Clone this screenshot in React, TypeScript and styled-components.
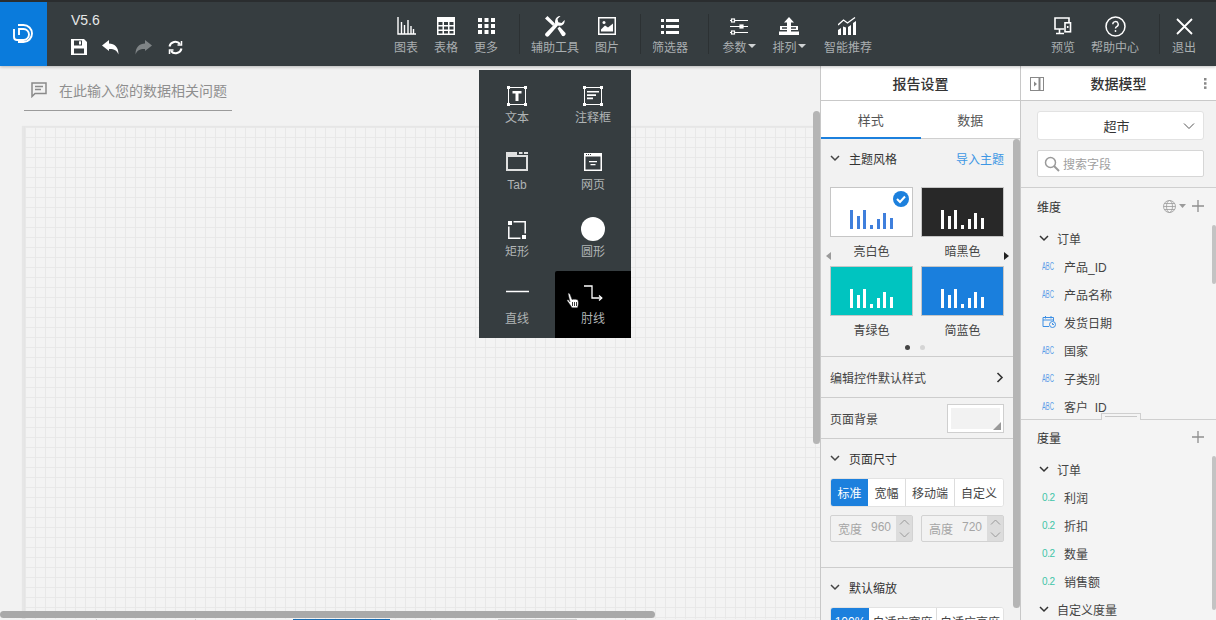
import React from "react";
import styled, { createGlobalStyle } from "styled-components";

const Global = createGlobalStyle`
  html, body { margin: 0; padding: 0; width: 1216px; height: 620px; overflow: hidden; background: #f2f2f2; }
  body { font-family: "Liberation Sans", "Noto Sans CJK SC", sans-serif; }
  * { box-sizing: border-box; }
`;

const Page = styled.div`
  position: relative;
  width: 1216px;
  height: 620px;
  display: flex;
  flex-direction: column;
  overflow: hidden;
`;

const Header = styled.header`
  height: 66px;
  flex: none;
  display: flex;
  background: #363d40;
  border-top: 2px solid #2a2d2f;
  box-shadow: 0 1px 3px rgba(0,0,0,.25);
  position: relative;
  z-index: 3;
`;
const Logo = styled.div`
  width: 47px;
  display: flex;
  align-items: center;
  justify-content: center;
  background: #0a7bdc;
`;
const VersionBlock = styled.div`
  width: 339px;
  padding: 10px 0 0 24px;
  color: #e6e8e8;
  font-size: 14px;
  line-height: 17px;
`;
const QuickIcons = styled.div`
  display: flex;
  gap: 15px;
  margin-top: 10px;
  align-items: center;
`;
const Tools = styled.div`
  display: flex;
  flex: 1;
  align-items: stretch;
`;
const Tool = styled.div<{ $w: number }>`
  width: ${p => p.$w}px;
  flex: none;
  display: flex;
  flex-direction: column;
  align-items: center;
  padding-top: 14px;
  color: #a9aeb0;
  font-size: 12px;
  white-space: nowrap;
`;
const ToolIcon = styled.div`
  height: 20px;
  display: flex;
  align-items: center;
  justify-content: center;
`;
const ToolLabel = styled.div`
  margin-top: 4px;
  line-height: 16px;
  display: flex;
  align-items: center;
  gap: 1px;
`;
const Caret = styled.span`
  width: 0;
  height: 0;
  border-left: 4px solid transparent;
  border-right: 4px solid transparent;
  border-top: 4px solid #d0d3d4;
  margin-bottom: 4px;
`;
const Sep = styled.div<{ $l: number; $r: number }>`
  width: 1px;
  flex: none;
  height: 40px;
  margin: 12px ${p => p.$r}px 0 ${p => p.$l}px;
  background: #2c3133;
`;
const Push = styled.div`
  flex: 1;
`;

const Body = styled.div`
  flex: 1;
  display: flex;
  min-height: 0;
`;
const CanvasArea = styled.main`
  position: relative;
  width: 820px;
  flex: none;
  background: #f2f2f2;
  padding: 11px 0 0 24px;
  overflow: hidden;
`;
const AskBar = styled.div`
  width: 208px;
  height: 34px;
  border-bottom: 1px solid #9b9b9b;
  display: flex;
  align-items: flex-start;
  padding: 4px 0 0 7px;
  gap: 12px;
  color: #8f8f8f;
  font-size: 14px;
  line-height: 20px;
  white-space: nowrap;
`;
const Grid = styled.div`
  width: 796px;
  height: 500px;
  margin-top: 15px;
  border-top: 1px solid #e6e6e6;
  border-left: 1px solid #e4e4e4;
  box-shadow: -2px 0 1px #e6e6e6;
  background-color: #f3f3f3;
  background-image:
    linear-gradient(to right, #e8e8e8 1px, transparent 1px),
    linear-gradient(to bottom, #e8e8e8 1px, transparent 1px);
  background-size: 10px 10px;
`;
const HScroll = styled.div`
  position: absolute;
  left: 0;
  bottom: 2px;
  width: 655px;
  height: 7px;
  border-radius: 4px;
  background: #a9a9a9;
`;
const Peek = styled.div`
  position: absolute;
  left: 0;
  right: 0;
  bottom: 0;
  height: 1px;
  display: flex;
  background: #f2f2f2;
`;
const PeekPart = styled.i<{ $l: number; $w: number; $c: string }>`
  display: block;
  margin-left: ${p => p.$l}px;
  width: ${p => p.$w}px;
  background: ${p => p.$c};
`;
const VScroll = styled.div<{ $top: number; $h: number; $w?: number; $c?: string }>`
  position: absolute;
  right: 0;
  top: ${p => p.$top}px;
  width: ${p => p.$w ?? 7}px;
  height: ${p => p.$h}px;
  border-radius: 4px;
  background: ${p => p.$c ?? "#b5b5b5"};
`;

const Menu = styled.div`
  position: absolute;
  left: 479px;
  top: 70px;
  width: 152px;
  height: 268px;
  background: #363d40;
  display: grid;
  grid-template-columns: 76px 76px;
  grid-template-rows: repeat(4, 67px);
  z-index: 5;
`;
const MenuItem = styled.div<{ $active?: boolean }>`
  position: relative;
  display: flex;
  flex-direction: column;
  align-items: center;
  padding-top: 14px;
  background: ${p => (p.$active ? "#000" : "transparent")};
  border-radius: ${p => (p.$active ? "2px 0 0 0" : "0")};
  color: #b0b4b5;
  font-size: 12px;
`;
const MenuIcon = styled.div`
  height: 23px;
  display: flex;
  align-items: center;
  justify-content: center;
`;
const MenuLabel = styled.div`
  margin-top: 3px;
  line-height: 16px;
`;
const Cursor = styled.svg`
  position: absolute;
  left: 11px;
  top: 21px;
`;

const Panel = styled.aside<{ $w: number }>`
  position: relative;
  width: ${p => p.$w}px;
  flex: none;
  background: #f2f2f2;
  border-left: 1px solid #c8c8c8;
  display: flex;
  flex-direction: column;
  overflow: hidden;
  color: #333;
`;
const PanelTitle = styled.div`
  height: 35px;
  flex: none;
  background: #fff;
  border-bottom: 1px solid #c9c9c9;
  display: flex;
  align-items: center;
  justify-content: center;
  font-size: 14px;
  font-weight: 500;
  color: #333;
  position: relative;
`;
const TitleLeft = styled.div`
  position: absolute;
  left: 9px;
  top: 11px;
  line-height: 0;
`;
const TitleRight = styled.div`
  position: absolute;
  right: 9px;
  top: 12px;
  line-height: 0;
`;
const Tabs = styled.div`
  height: 38px;
  flex: none;
  background: #fff;
  display: flex;
  border-bottom: 1px solid #cfcfcf;
`;
const Tab = styled.div<{ $on?: boolean }>`
  flex: 1;
  display: flex;
  align-items: center;
  justify-content: center;
  font-size: 13px;
  color: #555;
  border-bottom: 2px solid ${p => (p.$on ? "#1c80dd" : "transparent")};
  margin-bottom: -1px;
`;
const Section = styled.section<{ $h: number; $line?: boolean }>`
  height: ${p => p.$h}px;
  flex: none;
  padding: 0 16px 0 9px;
  border-bottom: ${p => (p.$line ? "1px solid #cdcdcd" : "0")};
`;
const SecHead = styled.div`
  display: flex;
  align-items: center;
  height: 39px;
  font-size: 12px;
  color: #333;
  gap: 9px;
`;
const ImportLink = styled.span`
  margin-left: auto;
  color: #3d97e4;
`;
const Themes = styled.div`
  display: grid;
  grid-template-columns: 83px 83px;
  column-gap: 8px;
  position: relative;
  margin-top: 9px;
`;
const ThemeCard = styled.div`
  display: flex;
  flex-direction: column;
  align-items: center;
  height: 79px;
  font-size: 12px;
  color: #444;
`;
const Swatch = styled.div<{ $bg: string; $fg?: string }>`
  position: relative;
  width: 83px;
  height: 50px;
  background: ${p => p.$bg};
  border: 1px solid #c6c6c6;
  display: flex;
  align-items: flex-end;
  justify-content: center;
  padding-bottom: 7px;
  margin-bottom: 5px;
`;
const Bars = styled.div`
  display: flex;
  align-items: flex-end;
  gap: 3.67px;
`;
const BarEl = styled.div<{ $c: string }>`
  width: 3px;
  background: ${p => p.$c};
`;
const Check = styled.div`
  position: absolute;
  top: 3px;
  right: 3px;
  line-height: 0;
`;
const ArrowL = styled.div<{ $c: string; $side: "l" | "r" }>`
  position: absolute;
  top: 65px;
  ${p => (p.$side === "l" ? "left: -4px;" : "right: -5px;")}
  width: 0;
  height: 0;
  border-top: 4px solid transparent;
  border-bottom: 4px solid transparent;
  ${p => (p.$side === "l" ? `border-right: 5px solid ${p.$c};` : `border-left: 5px solid ${p.$c};`)}
`;
const Dots = styled.div`
  display: flex;
  justify-content: center;
  gap: 10px;
  padding-right: 5px;
`;
const Dot = styled.i<{ $c: string }>`
  width: 5px;
  height: 5px;
  border-radius: 50%;
  background: ${p => p.$c};
`;
const RowLine = styled.div<{ $h: number }>`
  height: ${p => p.$h}px;
  flex: none;
  padding: 0 16px 0 9px;
  display: flex;
  align-items: center;
  justify-content: space-between;
  border-bottom: 1px solid #cdcdcd;
  font-size: 12px;
  color: #444;
`;
const ColorBox = styled.div`
  position: relative;
  width: 55px;
  height: 27px;
  background: #f2f2f2;
  border: 3px solid #fff;
  outline: 1px solid #cfcfcf;
  margin-right: 1px;
  &::after {
    content: "";
    position: absolute;
    right: -1px;
    bottom: -1px;
    border-left: 8px solid transparent;
    border-bottom: 8px solid #999;
  }
`;
const BtnGroup = styled.div<{ $cols: string }>`
  display: grid;
  grid-template-columns: ${p => p.$cols};
  width: 174px;
  height: 29px;
  background: #fff;
  border: 1px solid #e2e2e2;
  border-radius: 3px;
  font-size: 12px;
  overflow: hidden;
`;
const Seg = styled.div<{ $on?: boolean; $rule?: boolean }>`
  display: flex;
  align-items: center;
  justify-content: center;
  white-space: nowrap;
  overflow: hidden;
  background: ${p => (p.$on ? "#1c80dd" : "#fff")};
  color: ${p => (p.$on ? "#fff" : "#444")};
  border-left: ${p => (p.$rule ? "1px solid #ddd" : "0")};
`;
const SpinRow = styled.div`
  display: flex;
  justify-content: space-between;
  margin-top: 8px;
  width: 174px;
`;
const Spin = styled.div`
  width: 83px;
  height: 27px;
  border: 1px solid #d2d2d2;
  border-radius: 2px;
  display: flex;
  align-items: center;
  color: #a5a5a5;
  font-size: 12px;
  padding-left: 7px;
`;
const SpinText = styled.span`
  flex: 1;
  display: flex;
  gap: 9px;
`;
const SpinBtns = styled.div`
  width: 16px;
  height: 100%;
  background: #dcdcdc;
  display: flex;
  flex-direction: column;
  align-items: center;
  justify-content: space-around;
  line-height: 0;
`;

const ModelTop = styled.div`
  height: 87px;
  flex: none;
  padding: 10px 12px 0 16px;
  border-bottom: 1px solid #cfcfcf;
`;
const Select = styled.div`
  position: relative;
  width: 167px;
  height: 29px;
  background: #fff;
  border: 1px solid #e2e2e2;
  border-radius: 3px;
  display: flex;
  align-items: center;
  justify-content: center;
  padding-right: 8px;
  font-size: 13px;
  color: #333;
`;
const SelectArrow = styled.svg`
  position: absolute;
  right: 8px;
  top: 10px;
`;
const Search = styled.div`
  width: 167px;
  height: 27px;
  margin-top: 10px;
  background: #fff;
  border: 1px solid #d6d6d6;
  border-radius: 2px;
  display: flex;
  align-items: center;
  padding-left: 6px;
  gap: 3px;
  color: #a0a0a0;
  font-size: 12px;
`;
const FieldSection = styled.div<{ $h: number; $line?: boolean }>`
  height: ${p => p.$h}px;
  flex: none;
  padding: 0 12px 0 16px;
  overflow: hidden;
  background: #f4f4f4;
  border-bottom: ${p => (p.$line ? "1px solid #cfcfcf" : "0")};
`;
const FieldHead = styled.div<{ $up?: boolean }>`
  height: 36px;
  margin-top: ${p => (p.$up ? "-1px" : "0")};
  display: flex;
  align-items: center;
  justify-content: space-between;
  font-size: 12px;
  color: #333;
`;
const HeadIcons = styled.div`
  display: flex;
  align-items: center;
  gap: 3px;
  line-height: 0;
`;
const Group = styled.div`
  height: 28px;
  display: flex;
  align-items: center;
  gap: 8px;
  font-size: 12px;
  color: #444;
  padding-left: 2px;
`;
const Field = styled.div`
  height: 28px;
  display: flex;
  align-items: center;
  font-size: 12px;
  color: #444;
  white-space: pre;
  padding-left: 5px;
`;
const Badge = styled.span<{ $c: string }>`
  width: 22px;
  flex: none;
  margin-top: 2px;
  color: ${p => p.$c};
  font-size: 10px;
  letter-spacing: -.4px;
  line-height: 12px;
`;
const AbcBadge = styled(Badge)`
  letter-spacing: 0;
  transform: scaleX(.58);
  transform-origin: left center;
`;
const Handle = styled.div`
  position: absolute;
  left: 80px;
  top: 347px;
  width: 40px;
  height: 7px;
  background: #f4f4f4;
  border: 1px solid #cfcfcf;
  border-bottom: 0;
  &::after {
    content: "";
    display: block;
    margin: 2px 3px 0;
    border-top: 1px solid #c8c8c8;
  }
`;

const W = "#fff";
const svgBase = { fill: "none", stroke: W };

const Chev = ({ c = "#444" }: { c?: string }) => (
  <svg width="10" height="7" viewBox="0 0 10 7" fill="none" stroke={c} strokeWidth="1.5"><path d="M1 1l4 4 4-4" /></svg>
);

const BAR_H = [19, 13, 19, 4, 10, 16, 11];
const ThemeBars = ({ c }: { c: string }) => (
  <Bars>{BAR_H.map((h, i) => <BarEl key={i} $c={c} style={{ height: h }} />)}</Bars>
);

const icons = {
  chart: <svg width="19" height="18" viewBox="0 0 19 18" {...svgBase} strokeWidth="1.400"><path d="M1 0v17h18M4.500 5v12M7.500 8v9M11 3v14M14 9v8M16.500 12v5" /></svg>,
  table: <svg width="18" height="18" viewBox="0 0 18 18"><path fill="#fff" fillRule="evenodd" d="M0 0h18v18H0zM1.500 5v3h4V5zm5.500 0v3h4V5zm5.500 0v3h4V5zm-11 4.500v3h4v-3zm5.500 0v3h4v-3zm5.500 0v3h4v-3zm-11 4.500v2.500h4V14zm5.500 0v2.500h4V14zm5.500 0v2.500h4V14z" /></svg>,
  more: <svg width="17" height="16" viewBox="0 0 17 16" fill="#fff"><path d="M0 0h4v4H0zM6.500 0h4v4h-4zM13 0h4v4h-4zM0 6h4v4H0zM6.500 6h4v4h-4zM13 6h4v4h-4zM0 12h4v4H0zM6.500 12h4v4h-4zM13 12h4v4h-4z" /></svg>,
  tools: <svg width="22" height="22" viewBox="0 0 22 22" fill="#fff"><path d="M1 3.500 3.500 1 11 8.500 8.800 10.700zM14.500 1.200a4.800 4.800 0 0 1 2-.2l-3 3 .8 3.300 3.300.8 3-3a5 5 0 0 1-6.700 5.400L4.800 21a2.100 2.100 0 0 1-3-3l9.400-9.400c-.7-3 .5-6.300 3.300-7.400z" /><path d="m13.500 13.500 2-2 6 6.500c.6 2-1.500 3.700-3.300 3z" /></svg>,
  image: <svg width="18" height="18" viewBox="0 0 18 18"><path fill="#fff" fillRule="evenodd" d="M0 0h18v18H0zM1.500 1.500v15h15v-15z" /><path fill="#fff" d="M3 14.500v-2l4-4 3 2 5-4v8z" /><circle cx="6" cy="5.500" r="1.500" fill="#fff" /></svg>,
  filter: <svg width="18" height="15" viewBox="0 0 18 15" fill="#fff"><path d="M0 0h3v3H0zM5 0h13v3H5zM0 6h3v3H0zM5 6h13v3H5zM0 12h3v3H0zM5 12h13v3H5z" /></svg>,
  params: <svg width="18" height="17" viewBox="0 0 18 17" {...svgBase} strokeWidth="1.200"><path d="M0 2.500h1M5 2.500h13M0 8.500h10M13 8.500h5M0 14.500h1M5 14.500h13" /><rect x="1.500" y="1" width="3" height="3" /><rect x="10" y="7" width="3" height="3" fill="#fff" /><rect x="1.500" y="13" width="3" height="3" /></svg>,
  sort: <svg width="20" height="18" viewBox="0 0 20 18" fill="#fff"><path d="M10 0l5 5.500h-3V9h7v4h-7v1.500h8V18H0v-3.500h8V13H1V9h7V5.500H5z" /><path d="M3 10.300h5v1.400H3zM12 10.300h5v1.400h-5z" fill="#363d40" /></svg>,
  smart: <svg width="20" height="18" viewBox="0 0 20 18"><path d="M0 8l5.500-5 4 3L17 .5" fill="none" stroke="#fff" strokeWidth="1.300" /><path fill="#fff" d="M0 13l3-2v7H0zM5 9.500l3 1V18H5zM10 10l3-2v10h-3zM15 6l3-2v14h-3z" /></svg>,
  preview: <svg width="18" height="18" viewBox="0 0 18 18" {...svgBase} strokeWidth="1.600"><path d="M10 12H1V1h14v4M5.500 12v4.500M2 16.500h8" /><rect x="11" y="5.800" width="5.500" height="9" /><path d="M13.700 9v2" /></svg>,
  help: <svg width="21" height="21" viewBox="0 0 21 21"><circle cx="10.500" cy="10.500" r="9.500" fill="none" stroke="#fff" strokeWidth="1.500" /><path d="M7.800 8.200a2.700 2.700 0 1 1 4 2.400c-.9.500-1.300 1-1.300 2" fill="none" stroke="#fff" strokeWidth="1.400" /><circle cx="10.500" cy="15" r=".9" fill="#fff" /></svg>,
  close: <svg width="17" height="17" viewBox="0 0 17 17" stroke="#fff" strokeWidth="1.800"><path d="M1 1l15 15M16 1 1 16" /></svg>,
};

const Handles = () => (
  <>
    <rect x="0" y="0" width="3" height="3" fill="#fff" />
    <rect x="17" y="0" width="3" height="3" fill="#fff" />
    <rect x="0" y="17" width="3" height="3" fill="#fff" />
    <rect x="17" y="17" width="3" height="3" fill="#fff" />
  </>
);

const ToolItem = ({ w, icon, label, caret }: { w: number; icon: React.ReactNode; label: string; caret?: boolean }) => (
  <Tool $w={w}>
    <ToolIcon>{icon}</ToolIcon>
    <ToolLabel>{label}{caret && <Caret />}</ToolLabel>
  </Tool>
);

const menuItems: { label: string; icon: React.ReactNode; active?: boolean }[] = [
  { label: "文本", icon: <svg width="20" height="20" viewBox="0 0 20 20"><Handles /><path d="M1.500 1.500h17v17h-17z" fill="none" stroke="#fff" /><path d="M5.500 5h9v2.500h-3V15h-3V7.500h-3z" fill="#fff" /></svg> },
  { label: "注释框", icon: <svg width="20" height="20" viewBox="0 0 20 20"><Handles /><path d="M1.500 1.500h17v17h-17z" fill="none" stroke="#fff" /><path d="M4 5h12v1.600H4zM4 8.300h9v1.600H4zM4 11.600h6v1.600H4z" fill="#fff" /></svg> },
  { label: "Tab", icon: <svg width="22" height="19" viewBox="0 0 22 19" style={{ marginTop: -3 }}><path fill="#dfe0e0" fillRule="evenodd" d="M0 0h11v3h11v16H0zM2 5v12h18V5z" /><path fill="#dfe0e0" d="M13 0h3.500v2H13zM18 0h4v2h-4z" /></svg> },
  { label: "网页", icon: <svg width="18" height="18" viewBox="0 0 18 18" style={{ marginTop: -2 }}><path fill="#fff" fillRule="evenodd" d="M0 0h18v18H0zM1.500 3.500v13h15v-13z" /><path fill="#fff" d="M5 8h8v1.200H5zM6.500 11h5v1.200h-5z" /><path fill="#363d40" d="M2 1h1v1H2zM4 1h1v1H4zM6 1h1v1H6z" /></svg> },
  { label: "矩形", icon: <svg width="18" height="18" viewBox="0 0 18 18"><path d="M.8 5.500V17.200H12.500M5.500.8H17.200V12.500" fill="none" stroke="#fff" strokeWidth="1.500" /><rect x="0" y="0" width="4" height="4" fill="#fff" /><rect x="14" y="14" width="4" height="4" fill="#fff" /></svg> },
  { label: "圆形", icon: <svg width="24" height="24" viewBox="0 0 24 24" style={{ marginTop: -2 }}><circle cx="12" cy="12" r="12" fill="#fff" /></svg> },
  { label: "直线", icon: <svg width="23" height="13" viewBox="0 0 23 13"><path d="M0 1.500h23" stroke="#fff" strokeWidth="1.500" /></svg> },
  { label: "肘线", active: true, icon: <svg width="19" height="23" viewBox="0 0 19 23" fill="none" stroke="#fff" strokeWidth="1.300"><path d="M0 1h8v12h9" /><path d="M15 10.500 17.800 13 15 15.500" /></svg> },
];

const dims = ["产品_ID", "产品名称", "DATE", "国家", "子类别", "客户  ID"];
const measures = ["利润", "折扣", "数量", "销售额"];
const peeks = [
  { l: 96, w: 1, c: "#cfcfcf" },
  { l: 98, w: 1, c: "#cfcfcf" },
  { l: 97, w: 97, c: "#1b6cb0" },
  { l: 40, w: 1, c: "#cfcfcf" },
  { l: 67, w: 79, c: "#cfcfcf" },
  { l: 48, w: 1, c: "#cfcfcf" },
];
const SpinArrows = () => (
  <SpinBtns>
    <svg width="11" height="6" viewBox="0 0 11 6" fill="none" stroke="#999"><path d="M1 5.500l4.500-4.500L10 5.500" /></svg>
    <svg width="11" height="6" viewBox="0 0 11 6" fill="none" stroke="#999"><path d="M1 .5l4.500 4.500L10 .5" /></svg>
  </SpinBtns>
);

export default function App() {
  return (
    <Page>
      <Global />
      <Header>
        <Logo>
          <svg width="21" height="21" viewBox="0 0 21 21" fill="none" stroke="#fff" strokeWidth="1.900"><path d="M5 1h5.500a8.500 8.500 0 0 1 0 17H5" /><path d="M1 5v8a3 3 0 0 0 3 3h6.500a5.500 5.500 0 0 0 0-11H6v6" /></svg>
        </Logo>
        <VersionBlock>
          V5.6
          <QuickIcons>
            <svg width="16" height="16" viewBox="0 0 16 16"><path fill="#fff" fillRule="evenodd" d="M0 0h13l3 3v13H0zM3 1.500v5h8v-5zM8 2.300h2v3.300H8zM3 9.500v5h10v-5z" /></svg>
            <svg width="17" height="15" viewBox="0 0 17 15"><path fill="#fff" d="M0 5.500 7 0v3.500c5.500 0 9.500 3.500 9.500 11-1.500-4-4.500-5.700-9.500-5.500V11z" /></svg>
            <svg width="17" height="15" viewBox="0 0 17 15" style={{ marginLeft: 1 }}><path fill="#7f8486" d="M17 5.500 10 0v3.500C4.500 3.500.5 7 .5 14.500c1.500-4 4.500-5.700 9.500-5.500V11z" /></svg>
            <svg width="15" height="15" viewBox="0 0 15 15" style={{ marginLeft: 1 }} fill="none" stroke="#fff" strokeWidth="2"><path d="M1.500 6.500A6 6 0 0 1 12 4M13.500 8.500A6 6 0 0 1 3 11" /><path d="M13.500 1v4h-4M1.500 14v-4h4" strokeWidth="1.500" /></svg>
          </QuickIcons>
        </VersionBlock>
        <Tools>
          <ToolItem w={40} icon={icons.chart} label="图表" />
          <ToolItem w={40} icon={icons.table} label="表格" />
          <ToolItem w={40} icon={icons.more} label="更多" />
          <Sep $l={13} $r={9} />
          <ToolItem w={52} icon={icons.tools} label="辅助工具" />
          <ToolItem w={52} icon={icons.image} label="图片" />
          <Sep $l={7} $r={7} />
          <ToolItem w={44} icon={icons.filter} label="筛选器" />
          <Sep $l={16} $r={8} />
          <ToolItem w={44} icon={icons.params} label="参数" caret />
          <ToolItem w={56} icon={icons.sort} label="排列" caret />
          <ToolItem w={62} icon={icons.smart} label="智能推荐" />
          <Push />
          <ToolItem w={48} icon={icons.preview} label="预览" />
          <ToolItem w={56} icon={icons.help} label="帮助中心" />
          <Sep $l={16} $r={4} />
          <ToolItem w={40} icon={icons.close} label="退出" />
          <Tool $w={12} />
        </Tools>
      </Header>

      <Body>
        <CanvasArea>
          <AskBar>
            <svg width="16" height="16" viewBox="0 0 16 16" fill="none" stroke="#8a8a8a" strokeWidth="1.500" style={{ marginTop: 1 }}><path d="M1 1h14v10.500H4L1 14.500z" /><path d="M4 4.500h8M4 7.500h6" /></svg>
            在此输入您的数据相关问题
          </AskBar>
          <Grid />
          <VScroll $top={45} $h={333} />
          <Peek>
            {peeks.map((s, i) => <PeekPart key={i} $l={s.l} $w={s.w} $c={s.c} />)}
          </Peek>
          <HScroll />
        </CanvasArea>

        <Panel $w={200}>
          <PanelTitle>报告设置</PanelTitle>
          <Tabs>
            <Tab $on>样式</Tab>
            <Tab>数据</Tab>
          </Tabs>
          <Section $h={218} $line>
            <SecHead>
              <Chev />
              主题风格
              <ImportLink>导入主题</ImportLink>
            </SecHead>
            <Themes>
              <ThemeCard>
                <Swatch $bg="#fff">
                  <ThemeBars c="#3f7fdc" />
                  <Check>
                    <svg width="16" height="16" viewBox="0 0 16 16"><circle cx="8" cy="8" r="8" fill="#1c80dd" /><path d="M4 8l3 3 5-5.500" fill="none" stroke="#fff" strokeWidth="2" /></svg>
                  </Check>
                </Swatch>
                亮白色
              </ThemeCard>
              <ThemeCard>
                <Swatch $bg="#282828"><ThemeBars c="#fff" /></Swatch>
                暗黑色
              </ThemeCard>
              <ThemeCard>
                <Swatch $bg="#00c4c0"><ThemeBars c="#fff" /></Swatch>
                青绿色
              </ThemeCard>
              <ThemeCard>
                <Swatch $bg="#1a7fdd"><ThemeBars c="#fff" /></Swatch>
                简蓝色
              </ThemeCard>
              <ArrowL $side="l" $c="#9a9a9a" />
              <ArrowL $side="r" $c="#222" />
            </Themes>
            <Dots>
              <Dot $c="#444" />
              <Dot $c="#d5d5d5" />
            </Dots>
          </Section>
          <RowLine $h={41}>
            编辑控件默认样式
            <svg width="8" height="11" viewBox="0 0 8 11" fill="none" stroke="#333" strokeWidth="1.600"><path d="M1.500 1l4.500 4.500L1.500 10" /></svg>
          </RowLine>
          <RowLine $h={41}>
            页面背景
            <ColorBox />
          </RowLine>
          <Section $h={129} $line>
            <SecHead>
              <Chev />
              页面尺寸
            </SecHead>
            <BtnGroup $cols="37px 37px 49px 1fr">
              <Seg $on>标准</Seg>
              <Seg>宽幅</Seg>
              <Seg $rule>移动端</Seg>
              <Seg $rule>自定义</Seg>
            </BtnGroup>
            <SpinRow>
              <Spin>
                <SpinText><span>宽度</span><span>960</span></SpinText>
                <SpinArrows />
              </Spin>
              <Spin>
                <SpinText><span>高度</span><span>720</span></SpinText>
                <SpinArrows />
              </Spin>
            </SpinRow>
          </Section>
          <Section $h={100}>
            <SecHead>
              <Chev />
              默认缩放
            </SecHead>
            <BtnGroup $cols="38px 67px 1fr">
              <Seg $on>100%</Seg>
              <Seg>自适应宽度</Seg>
              <Seg $rule>自适应高度</Seg>
            </BtnGroup>
          </Section>
          <VScroll $top={73} $h={469} />
        </Panel>

        <Panel $w={196}>
          <PanelTitle>
            <TitleLeft>
              <svg width="14" height="14" viewBox="0 0 14 14" fill="none" stroke="#888"><rect x=".5" y=".5" width="13" height="13" /><path d="M9.500 1v12" strokeWidth="2" /><path d="M4 4.500 7 7l-3 2.500z" fill="#888" stroke="none" /></svg>
            </TitleLeft>
            数据模型
            <TitleRight>
              <svg width="3" height="11" viewBox="0 0 3 11" fill="#888"><rect width="2.500" height="2.500" /><rect y="4.200" width="2.500" height="2.500" /><rect y="8.400" width="2.500" height="2.500" /></svg>
            </TitleRight>
          </PanelTitle>
          <ModelTop>
            <Select>
              超市
              <SelectArrow width="12" height="8" viewBox="0 0 12 8" fill="none" stroke="#555"><path d="M1 1.500l5 5 5-5" /></SelectArrow>
            </Select>
            <Search>
              <svg width="16" height="16" viewBox="0 0 16 16" fill="none" stroke="#9a9a9a" strokeWidth="1.500"><circle cx="6.500" cy="6.500" r="5" /><path d="M10 10l5 5" strokeWidth="2" /></svg>
              搜索字段
            </Search>
          </ModelTop>
          <FieldSection $h={232} $line>
            <FieldHead>
              维度
              <HeadIcons>
                <svg width="13" height="13" viewBox="0 0 13 13" fill="none" stroke="#9a9a9a" strokeWidth=".8"><circle cx="6.500" cy="6.500" r="6" /><ellipse cx="6.500" cy="6.500" rx="3" ry="6" /><path d="M.5 6.500h12M1.300 3.500h10.400M1.300 9.500h10.400" /></svg>
                <svg width="7" height="4" viewBox="0 0 7 4" fill="#9a9a9a"><path d="M0 0h7L3.500 4z" /></svg>
                <svg width="12" height="12" viewBox="0 0 12 12" stroke="#8f8f8f" strokeWidth="1.300" style={{ marginLeft: 3 }}><path d="M6 0v12M0 6h12" /></svg>
              </HeadIcons>
            </FieldHead>
            <Group><Chev c="#333" />订单</Group>
            {dims.map(d => (
              <Field key={d}>
                {d === "DATE" ? (
                  <>
                    <Badge $c="#3d8fe4">
                      <svg width="14" height="13" viewBox="0 0 14 13" fill="none" stroke="#3d8fe4"><path d="M7 11.500H1V2.500h10.500V6M1 5h10.500M3.500 1v2.500M9 1v2.500" /><circle cx="10.500" cy="9.500" r="3" /><path d="M10.500 8v1.500h1.500" /></svg>
                    </Badge>
                    发货日期
                  </>
                ) : (
                  <>
                    <AbcBadge $c="#5b9ee8">ABC</AbcBadge>
                    {d}
                  </>
                )}
              </Field>
            ))}
          </FieldSection>
          <FieldSection $h={200}>
            <FieldHead $up>
              度量
              <HeadIcons>
                <svg width="12" height="12" viewBox="0 0 12 12" stroke="#8f8f8f" strokeWidth="1.300"><path d="M6 0v12M0 6h12" /></svg>
              </HeadIcons>
            </FieldHead>
            <Group><Chev c="#333" />订单</Group>
            {measures.map(m => (
              <Field key={m}>
                <Badge $c="#3fc4a8">0.2</Badge>
                {m}
              </Field>
            ))}
            <Group><Chev c="#333" />自定义度量</Group>
          </FieldSection>
          <Handle />
          <VScroll $top={159} $h={59} $w={4} $c="#c3c3c3" />
          <VScroll $top={390} $h={154} $w={4} $c="#c3c3c3" />
        </Panel>
      </Body>

      <Menu>
        {menuItems.map(it => (
          <MenuItem key={it.label} $active={it.active}>
            <MenuIcon>{it.icon}</MenuIcon>
            <MenuLabel>{it.label}</MenuLabel>
            {it.active && (
              <Cursor width="14" height="17" viewBox="0 0 14 17">
                <path d="M2 1.500c1-.8 2 .2 2.500 2L6 7.500c1.500-.5 5-.5 6 .8.600 2 .5 5-.5 7.500H6L3.500 12 1 8.500c.3-1 1.500-.8 2.500.5L4 10 2 1.500z" fill="#fff" stroke="#222" strokeWidth=".5" />
                <path d="M6.500 10v4M8.500 10v4M10.500 10v4" stroke="#222" strokeWidth=".9" />
              </Cursor>
            )}
          </MenuItem>
        ))}
      </Menu>
    </Page>
  );
}
